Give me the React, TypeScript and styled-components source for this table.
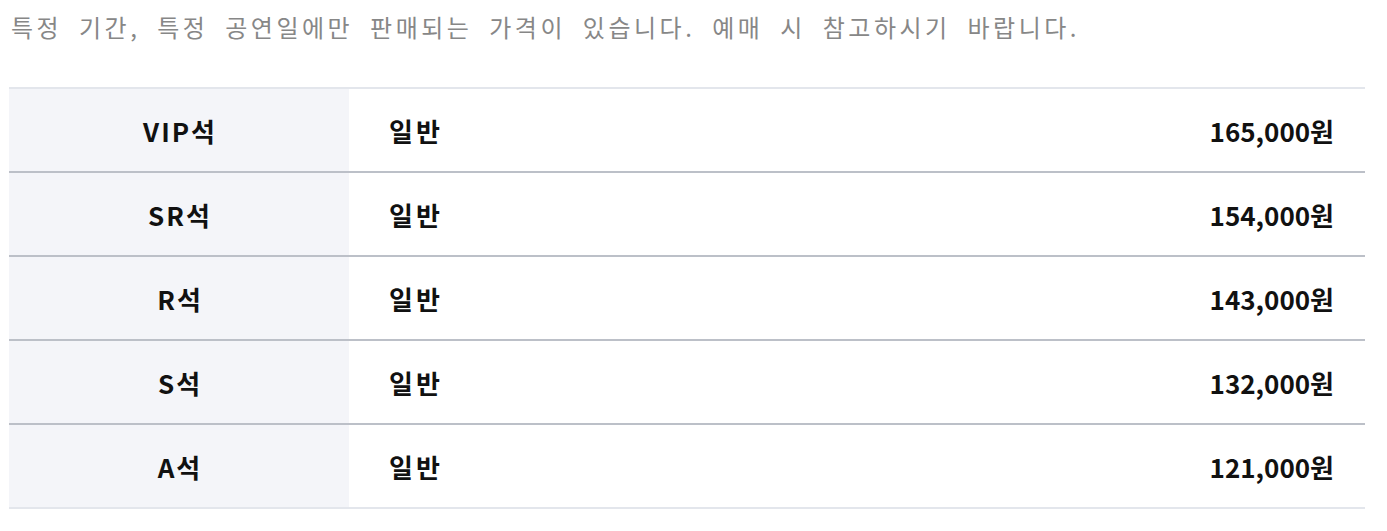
import styled, { createGlobalStyle } from 'styled-components';

const GlobalStyle = createGlobalStyle`
  html, body {
    margin: 0;
    padding: 0;
    background: #fff;
  }
  body {
    font-family: "Noto Sans CJK KR", "Noto Sans", sans-serif;
  }
`;

const Wrapper = styled.div`
  width: 1356px;
  padding: 10px 0 0 9px;
`;

const Notice = styled.p`
  margin: 0 0 0 2px;
  font-size: 24px;
  line-height: 34px;
  color: #878787;
  letter-spacing: 3.5px;
  word-spacing: 8px;
  white-space: nowrap;
`;

const PriceTable = styled.table`
  width: 100%;
  margin-top: 43px;
  border-collapse: collapse;
  border-top: 2px solid #e3e6ec;
  border-bottom: 2px solid #e3e6ec;
`;

const Row = styled.tr`
  & + & td,
  & + & th {
    border-top: 2px solid #bcc0c8;
  }
`;

const Grade = styled.th`
  width: 338px;
  height: 82px;
  padding: 0 0 0 2px;
  background: #f4f5f9;
  font-size: 26px;
  font-weight: 700;
  color: #111;
  text-align: center;
  letter-spacing: 2px;
`;

const Kind = styled.td`
  padding: 0 0 0 40px;
  font-size: 26px;
  font-weight: 700;
  color: #111;
  text-align: left;
  letter-spacing: 3px;
`;

const Price = styled.td`
  padding: 0 31px 0 0;
  font-size: 26px;
  font-weight: 700;
  color: #111;
  text-align: right;
`;

const prices = [
  { grade: 'VIP석', kind: '일반', price: '165,000원' },
  { grade: 'SR석', kind: '일반', price: '154,000원' },
  { grade: 'R석', kind: '일반', price: '143,000원' },
  { grade: 'S석', kind: '일반', price: '132,000원' },
  { grade: 'A석', kind: '일반', price: '121,000원' },
];

export default function App() {
  return (
    <>
      <GlobalStyle />
      <Wrapper>
        <Notice>특정 기간, 특정 공연일에만 판매되는 가격이 있습니다. 예매 시 참고하시기 바랍니다.</Notice>
        <PriceTable>
          <tbody>
            {prices.map((p) => (
              <Row key={p.grade}>
                <Grade scope="row">{p.grade}</Grade>
                <Kind>{p.kind}</Kind>
                <Price>{p.price}</Price>
              </Row>
            ))}
          </tbody>
        </PriceTable>
      </Wrapper>
    </>
  );
}
